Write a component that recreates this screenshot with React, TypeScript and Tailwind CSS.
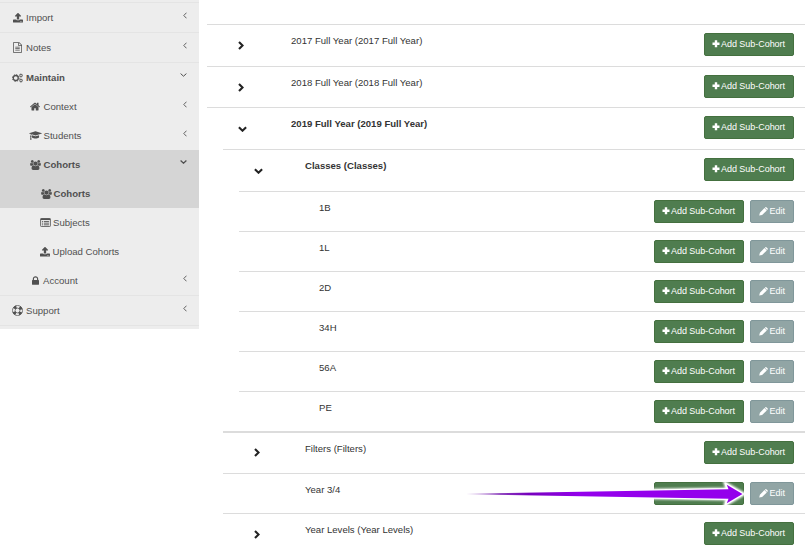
import React from "react";

type IconName =
  | "upload" | "file" | "cogs" | "home" | "cap" | "users" | "list" | "lock" | "ring";

const PATHS: Partial<Record<IconName, { box: string; d: string }>> = {
  upload: {
    box: "0 128 1664 1536",
    d: "M1280 1472q0-26-19-45t-45-19-45 19-19 45 19 45 45 19 45-19 19-45zm256 0q0-26-19-45t-45-19-45 19-19 45 19 45 45 19 45-19 19-45zm128-224v320q0 40-28 68t-68 28h-1472q-40 0-68-28t-28-68v-320q0-40 28-68t68-28h427q21 56 70.5 92t110.5 36h256q61 0 110.5-36t70.5-92h427q40 0 68 28t28 68zm-325-648q-17 40-59 40h-256v448q0 26-19 45t-45 19h-256q-26 0-45-19t-19-45v-448h-256q-42 0-59-40-17-39 14-69l448-448q18-19 45-19t45 19l448 448q31 30 14 69z",
  },
  file: {
    box: "128 0 1536 1792",
    d: "M1596 380q28 28 48 76t20 88v1152q0 40-28 68t-68 28h-1344q-40 0-68-28t-28-68v-1600q0-40 28-68t68-28h896q40 0 88 20t76 48zm-444-244v376h376q-10-29-22-41l-313-313q-12-12-41-22zm384 1528v-1024h-416q-40 0-68-28t-28-68v-416h-768v1536h1280zm-1024-864q0-14 9-23t23-9h704q14 0 23 9t9 23v64q0 14-9 23t-23 9h-704q-14 0-23-9t-9-23v-64zm736 224q14 0 23 9t9 23v64q0 14-9 23t-23 9h-704q-14 0-23-9t-9-23v-64q0-14 9-23t23-9h704zm0 256q14 0 23 9t9 23v64q0 14-9 23t-23 9h-704q-14 0-23-9t-9-23v-64q0-14 9-23t23-9h704z",
  },
  home: {
    box: "80 220 1632 1330",
    d: "M1472 992v480q0 26-19 45t-45 19h-384v-384h-256v384h-384q-26 0-45-19t-19-45v-480q0-1 .5-3t.5-3l575-474 575 474q1 2 1 6zm223-69l-62 74q-8 9-21 11h-3q-13 0-21-7l-692-577-692 577q-12 8-24 7-13-2-21-11l-62-74q-8-10-7-23.5t11-21.5l719-599q32-26 76-26t76 26l244 204v-195q0-14 9-23t23-9h192q14 0 23 9t9 23v408l219 182q10 8 11 21.5t-7 23.5z",
  },
  cap: {
    box: "0 128 2304 1536",
    d: "M1774 836l18 316q4 69-82 128t-235 93.5-323 34.5-323-34.5-235-93.5-82-128l18-316 574 181q22 7 48 7t48-7zm530-324q0 23-22 31l-1120 352q-4 1-10 1t-10-1l-652-206q-43 34-71 111.5t-34 178.5q63 36 63 109 0 69-58 107l58 433q2 14-8 25-9 11-24 11h-192q-15 0-24-11-10-11-8-25l58-433q-58-38-58-107 0-73 65-111 11-207 98-330l-333-104q-22-8-22-31t22-31l1120-352q4-1 10-1t10 1l1120 352q22 8 22 31z",
  },
  users: {
    box: "0 0 1920 1792",
    d: "M593 896q-162 5-265 128h-134q-82 0-138-40.5t-56-118.5q0-353 124-353 6 0 43.5 21t97.5 42.5 119 21.5q67 0 133-23-5 37-5 66 0 139 81 256zm1071 637q0 120-73 189.5t-194 69.5h-874q-121 0-194-69.5t-73-189.5q0-53 3.5-103.5t14-109 26.5-108.5 43-97.5 62-81 85.5-53.5 111.5-20q10 0 43 21.5t73 48 107 48 135 21.5 135-21.5 107-48 73-48 43-21.5q61 0 111.5 20t85.5 53.5 62 81 43 97.5 26.5 108.5 14 109 3.5 103.5zm-1024-1277q0 106-75 181t-181 75-181-75-75-181 75-181 181-75 181 75 75 181zm704 384q0 159-112.5 271.5t-271.5 112.5-271.5-112.5-112.5-271.5 112.5-271.5 271.5-112.5 271.5 112.5 112.5 271.5zm576 225q0 78-56 118.5t-138 40.5h-134q-103-123-265-128 81-117 81-256 0-29-5-66 66 23 133 23 59 0 119-21.5t97.5-42.5 43.5-21q124 0 124 353zm-128-609q0 106-75 181t-181 75-181-75-75-181 75-181 181-75 181 75 75 181z",
  },
  lock: {
    box: "320 128 1152 1408",
    d: "M640 768h512v-192q0-106-75-181t-181-75-181 75-75 181v192zm832 96v576q0 40-28 68t-68 28h-960q-40 0-68-28t-28-68v-576q0-40 28-68t68-28h32v-192q0-184 132-316t316-132 316 132 132 316v192h32q40 0 68 28t28 68z",
  },
};

function Icon({ name, className }: { name: IconName; className: string }) {
  const p = PATHS[name];
  if (p) {
    return (
      <svg viewBox={p.box} className={className} fill="currentColor">
        <path d={p.d} />
      </svg>
    );
  }
  if (name === "cogs") {
    return (
      <svg viewBox="0 0 22 20" className={className} fill="none" stroke="currentColor">
        <circle cx="7.5" cy="10" r="5" strokeWidth="2.6" />
        <circle cx="7.5" cy="10" r="6.7" strokeWidth="2" strokeDasharray="2.63 2.63" />
        <circle cx="18" cy="5" r="2.3" strokeWidth="1.7" />
        <circle cx="18" cy="5" r="3.6" strokeWidth="1.2" strokeDasharray="1.4 1.42" />
        <circle cx="18" cy="15" r="2.3" strokeWidth="1.7" />
        <circle cx="18" cy="15" r="3.6" strokeWidth="1.2" strokeDasharray="1.4 1.42" />
      </svg>
    );
  }
  if (name === "list") {
    return (
      <svg viewBox="0 0 20 17" className={className} fill="none" stroke="currentColor">
        <rect x="0.8" y="0.8" width="18.4" height="15.4" rx="1.5" strokeWidth="1.6" />
        <path d="M1 2.3H19" strokeWidth="3" />
        <path d="M3.5 6.5H5.5M7 6.5H16.5M3.5 9.7H5.5M7 9.7H16.5M3.5 12.9H5.5M7 12.9H16.5" strokeWidth="1.7" />
      </svg>
    );
  }
  return (
    <svg viewBox="0 0 20 20" className={className} fill="none" stroke="currentColor">
      <circle cx="10" cy="10" r="9.2" strokeWidth="1.3" />
      <circle cx="10" cy="10" r="4.4" strokeWidth="1.3" />
      <circle cx="10" cy="10" r="6.8" strokeWidth="5" strokeDasharray="5 5.68" strokeDashoffset="-2.84" />
    </svg>
  );
}

type NavItem = {
  icon: IconName;
  iconClass: string;
  label: string;
  row: string;
  bold?: boolean;
  arrow?: "left" | "down";
};

const TOP = "h-[30px] border-t border-[#e4e4e4] pl-3";
const L1 = "h-[29px] pl-[29px]";
const L2 = "h-[29px] pl-[40px]";

const NAV: NavItem[] = [
  { icon: "upload", iconClass: "w-[10px] h-[10px] ml-[1px] mr-[3px]", label: "Import", row: TOP, arrow: "left" },
  { icon: "file", iconClass: "w-[9px] h-[11px] ml-[1px] mr-[4px]", label: "Notes", row: TOP, arrow: "left" },
  { icon: "cogs", iconClass: "w-[11px] h-[10px] mr-[3px]", label: "Maintain", row: TOP, bold: true, arrow: "down" },
  { icon: "home", iconClass: "w-[10px] h-[9px] ml-[1px] mr-[3.5px]", label: "Context", row: L1, arrow: "left" },
  { icon: "cap", iconClass: "w-[13px] h-[9px] mr-[1.5px]", label: "Students", row: L1, arrow: "left" },
  { icon: "users", iconClass: "w-[11px] h-[10px] ml-[0.5px] mr-[3px]", label: "Cohorts", row: L1 + " bg-[#d5d5d5]", bold: true, arrow: "down" },
  { icon: "users", iconClass: "w-[11px] h-[10px] ml-[0.5px] mr-[2px]", label: "Cohorts", row: L2 + " bg-[#d5d5d5]", bold: true },
  { icon: "list", iconClass: "w-[11px] h-[9px] mr-[2px]", label: "Subjects", row: L2 },
  { icon: "upload", iconClass: "w-[10px] h-[10px] mr-[2.5px]", label: "Upload Cohorts", row: L2 },
  { icon: "lock", iconClass: "w-[7px] h-[9px] ml-[3px] mr-[4px]", label: "Account", row: L1, arrow: "left" },
  { icon: "ring", iconClass: "w-[11px] h-[11px] mr-[3px]", label: "Support", row: TOP, arrow: "left" },
];

function Sidebar() {
  return (
    <nav className="h-[329px] w-[199px] shrink-0 bg-[#ededed] pt-[2px] text-[#505050]">
      {NAV.map((n, i) => (
        <div key={i} className={`flex items-center ${n.row}`}>
          <Icon name={n.icon} className={`shrink-0 ${n.iconClass}`} />
          <span className={`grow text-[9.6px] leading-3 ${n.bold ? "font-bold" : ""}`}>{n.label}</span>
          {n.arrow === "left" && (
            <svg viewBox="0 0 4 7" className="mr-[12px] mb-[5px] h-[7px] w-[4px]" fill="none" stroke="currentColor" strokeWidth="0.9">
              <path d="M3.5 0.7L0.8 3.5L3.5 6.3" />
            </svg>
          )}
          {n.arrow === "down" && (
            <svg viewBox="0 0 7 4" className="mr-[12px] mb-[5px] h-[4px] w-[7px]" fill="none" stroke="currentColor" strokeWidth={n.label === "Cohorts" ? 1.3 : 1}>
              <path d="M0.6 0.6L3.5 3.2L6.4 0.6" />
            </svg>
          )}
        </div>
      ))}
      <div className="border-t border-[#e4e4e4]" />
    </nav>
  );
}

function AddButton() {
  return (
    <button className="flex h-[23px] w-[90px] items-center rounded-[2px] border border-[#44703f] bg-[#4f7d4f] pb-px pl-[7px] text-[9px] leading-3 whitespace-nowrap text-white">
      <svg viewBox="0 0 8 8" className="mr-px h-2 w-2 shrink-0" stroke="currentColor" strokeWidth="2.4">
        <path d="M4 0.3V7.3M0.5 3.8H7.5" />
      </svg>
      <span className="tracking-[-0.04px]">Add Sub-Cohort</span>
    </button>
  );
}

function EditButton() {
  return (
    <button className="flex h-[23px] w-11 items-center rounded-[2px] border border-[#80979a] bg-[#91a5a5] pb-px pl-2 text-[9px] leading-3 text-white">
      <svg viewBox="0 0 9 9" className="mr-[1.5px] h-[9px] w-[9px] shrink-0" fill="currentColor">
        <path d="M0.2 8.6L0.9 5.7L5.5 1.1L7.8 3.4L3.1 8ZM5.9 0.8L6.4 0.3Q7 -0.1 7.6 0.4L8.5 1.3Q9 1.9 8.6 2.5L8.1 3Z" />
      </svg>
      Edit
    </button>
  );
}

type Row = {
  label: string;
  row: string;
  labelLeft: string;
  state?: "open" | "closed";
  edit?: boolean;
};

const R0 = "ml-[8px]";
const R1 = "ml-[24px]";
const R2 = "ml-[40px]";

const ROWS: Row[] = [
  { label: "2017 Full Year (2017 Full Year)", row: R0 + " h-[42px] border-t", labelLeft: "w-[84px]", state: "closed" },
  { label: "2018 Full Year (2018 Full Year)", row: R0 + " h-[41px] border-t", labelLeft: "w-[84px]", state: "closed" },
  { label: "2019 Full Year (2019 Full Year)", row: R0 + " h-[42px] border-t", labelLeft: "w-[84px]", state: "open" },
  { label: "Classes (Classes)", row: R1 + " h-[42px] border-t", labelLeft: "w-[82px]", state: "open" },
  { label: "1B", row: R2 + " h-[40px] border-t", labelLeft: "w-[80px]", edit: true },
  { label: "1L", row: R2 + " h-[40px] border-t", labelLeft: "w-[80px]", edit: true },
  { label: "2D", row: R2 + " h-[40px] border-t", labelLeft: "w-[80px]", edit: true },
  { label: "34H", row: R2 + " h-[40px] border-t", labelLeft: "w-[80px]", edit: true },
  { label: "56A", row: R2 + " h-[40px] border-t", labelLeft: "w-[80px]", edit: true },
  { label: "PE", row: R2 + " h-[40px] border-t", labelLeft: "w-[80px]", edit: true },
  { label: "Filters (Filters)", row: R1 + " h-[42px] border-t-2", labelLeft: "w-[82px] -mt-px", state: "closed" },
  { label: "Year 3/4", row: R1 + " h-[40px] border-t", labelLeft: "w-[82px]", edit: true },
  { label: "Year Levels (Year Levels)", row: R1 + " h-[37px] border-t", labelLeft: "w-[82px]", state: "closed" },
];

function CohortTree() {
  return (
    <main className="min-w-0 grow pt-6 text-[#333]">
      {ROWS.map((r) => (
        <div key={r.label} className={`flex items-start border-[#dcdcdc] ${r.row}`}>
          <div className={`shrink-0 pl-[31px] ${r.labelLeft}`}>
            {r.state === "closed" && (
              <svg viewBox="0 0 6 9" className="mt-4 h-[9px] w-[6px]" fill="none" stroke="#222" strokeWidth="2.1">
                <path d="M1 0.9L4.6 4.5L1 8.1" />
              </svg>
            )}
            {r.state === "open" && (
              <svg viewBox="0 0 9 6" className="mt-[18px] h-[6px] w-[9px]" fill="none" stroke="#222" strokeWidth="2.1">
                <path d="M0.9 1.3L4.5 4.7L8.1 1.3" />
              </svg>
            )}
          </div>
          <span className={`mt-[10px] grow text-[9.57px] leading-3 ${r.state === "open" ? "font-bold" : ""}`}>{r.label}</span>
          <div className="mt-2 mr-[11px] flex gap-1.5">
            <AddButton />
            {r.edit && <EditButton />}
          </div>
        </div>
      ))}
    </main>
  );
}

function PointerArrow() {
  return (
    <svg viewBox="0 0 290 36" className="pointer-events-none absolute top-[476px] left-[460px] h-[36px] w-[290px]">
      <defs>
        <linearGradient id="shaft" gradientUnits="userSpaceOnUse" x1="6" y1="0" x2="120" y2="0">
          <stop offset="0" stopColor="#7a20b0" stopOpacity="0" />
          <stop offset="0.3" stopColor="#6d0cab" stopOpacity="0.8" />
          <stop offset="0.55" stopColor="#7600bd" />
          <stop offset="1" stopColor="#9400ec" />
        </linearGradient>
        <filter id="glow" x="-10%" y="-60%" width="120%" height="220%">
          <feGaussianBlur stdDeviation="1.3" />
        </filter>
        <clipPath id="over-button">
          <rect x="194" y="6" width="90" height="23" />
        </clipPath>
      </defs>
      <g clipPath="url(#over-button)">
        <path d="M7 18L268 13.5L266 8L283 18L266 28L268 22.5Z" fill="white" stroke="white" strokeWidth="4" filter="url(#glow)" />
      </g>
      <path d="M100 16L267 12.8L265.5 7.5L283 18L265.5 28.5L267 23.2L100 20Z" fill="white" stroke="white" strokeWidth="1.6" strokeLinejoin="round" />
      <path d="M7 17.6L268.5 13.2L266.8 8.8L282.5 18L266.8 27.2L268.5 22.8L7 18.4Z" fill="url(#shaft)" />
    </svg>
  );
}

export default function App() {
  return (
    <div
      className="relative flex h-[550px] w-[805px] items-start overflow-hidden bg-white"
      style={{ fontFamily: '"Liberation Sans", Arial, sans-serif' }}
    >
      <Sidebar />
      <CohortTree />
      <PointerArrow />
    </div>
  );
}
